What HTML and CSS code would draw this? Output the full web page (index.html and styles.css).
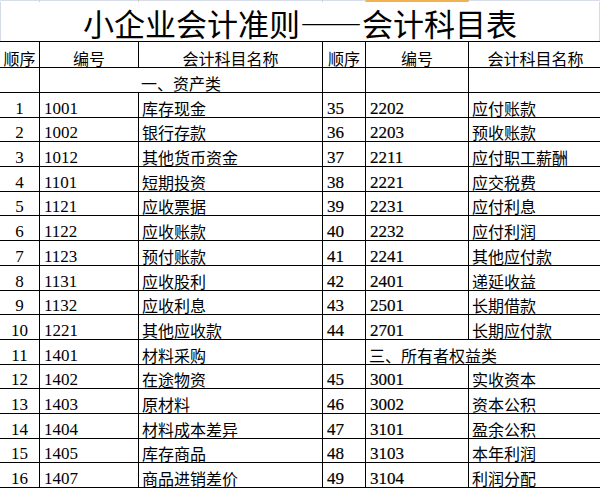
FILE: index.html
```html
<!DOCTYPE html>
<html lang="zh-CN">
<head>
<meta charset="utf-8">
<title>小企业会计准则——会计科目表</title>
<link rel="stylesheet" href="styles.css">
</head>
<body>
<div class="gridtop"><span></span><span></span><span></span><span></span><span class="sel"></span><span></span></div>
<h1 class="title">小企业会计准则——会计科目表</h1>
<div class="sheet">
  <div class="c h">顺序</div><div class="c h">编号</div><div class="c h">会计科目名称</div><div class="c h">顺序</div><div class="c h">编号</div><div class="c h">会计科目名称</div>

  <div class="c"></div><div class="c span2 ctr">一、资产类</div><div class="c"></div><div class="c"></div><div class="c"></div>

  <div class="c n ctr">1</div><div class="c n">1001</div><div class="c">库存现金</div><div class="c n b">35</div><div class="c n b">2202</div><div class="c">应付账款</div>
  <div class="c n ctr">2</div><div class="c n">1002</div><div class="c">银行存款</div><div class="c n b">36</div><div class="c n b">2203</div><div class="c">预收账款</div>
  <div class="c n ctr">3</div><div class="c n">1012</div><div class="c">其他货币资金</div><div class="c n b">37</div><div class="c n b">2211</div><div class="c">应付职工薪酬</div>
  <div class="c n ctr">4</div><div class="c n">1101</div><div class="c">短期投资</div><div class="c n b">38</div><div class="c n b">2221</div><div class="c">应交税费</div>
  <div class="c n ctr">5</div><div class="c n">1121</div><div class="c">应收票据</div><div class="c n b">39</div><div class="c n b">2231</div><div class="c">应付利息</div>
  <div class="c n ctr">6</div><div class="c n">1122</div><div class="c">应收账款</div><div class="c n b">40</div><div class="c n b">2232</div><div class="c">应付利润</div>
  <div class="c n ctr">7</div><div class="c n">1123</div><div class="c">预付账款</div><div class="c n b">41</div><div class="c n b">2241</div><div class="c">其他应付款</div>
  <div class="c n ctr">8</div><div class="c n">1131</div><div class="c">应收股利</div><div class="c n b">42</div><div class="c n b">2401</div><div class="c">递延收益</div>
  <div class="c n ctr">9</div><div class="c n">1132</div><div class="c">应收利息</div><div class="c n b">43</div><div class="c n b">2501</div><div class="c">长期借款</div>
  <div class="c n ctr">10</div><div class="c n">1221</div><div class="c">其他应收款</div><div class="c n b">44</div><div class="c n b">2701</div><div class="c">长期应付款</div>
  <div class="c n ctr">11</div><div class="c n">1401</div><div class="c">材料采购</div><div class="c"></div><div class="c span2">三、所有者权益类</div>
  <div class="c n ctr">12</div><div class="c n">1402</div><div class="c">在途物资</div><div class="c n b">45</div><div class="c n b">3001</div><div class="c">实收资本</div>
  <div class="c n ctr">13</div><div class="c n">1403</div><div class="c">原材料</div><div class="c n b">46</div><div class="c n b">3002</div><div class="c">资本公积</div>
  <div class="c n ctr">14</div><div class="c n">1404</div><div class="c">材料成本差异</div><div class="c n b">47</div><div class="c n b">3101</div><div class="c">盈余公积</div>
  <div class="c n ctr">15</div><div class="c n">1405</div><div class="c">库存商品</div><div class="c n b">48</div><div class="c n b">3103</div><div class="c">本年利润</div>
  <div class="c n ctr">16</div><div class="c n">1407</div><div class="c">商品进销差价</div><div class="c n b">49</div><div class="c n b">3104</div><div class="c">利润分配</div>
</div>
</body>
</html>
```
FILE: styles.css
```css
html, body {
  margin: 0;
  padding: 0;
  overflow: hidden;
  background: #ffffff;
}

body {
  width: 600px;
  height: 489px;
  font-family: "Noto Sans CJK SC", sans-serif;
  color: #000000;
}

.gridtop {
  display: grid;
  grid-template-columns: 40px 99px 184px 43px 103px 134px;
  height: 2px;
  overflow: hidden;
}

.gridtop span {
  border-right: 1px solid #c3cddc;
  border-top: 1px solid #d6dde8;
}

.gridtop .sel {
  background: #f2b250;
  border-top-color: #f2b250;
}

.title {
  box-sizing: border-box;
  width: 600px;
  height: 39px;
  margin: 0;
  padding-bottom: 3px;
  display: flex;
  align-items: flex-end;
  justify-content: center;
  font-size: 31px;
  line-height: 31px;
  font-weight: 400;
  white-space: nowrap;
  border-left: 1px solid #d3dae6;
  border-right: 1px solid #d3dae6;
}

.sheet {
  display: grid;
  grid-template-columns: 40px 99px 184px 43px 103px 134px;
  grid-template-rows: 26px 25px repeat(16, 24.6875px);
  width: 603px;
  border-top: 1px solid #000000;
}

.c {
  box-sizing: border-box;
  display: flex;
  align-items: flex-end;
  justify-content: flex-start;
  padding: 0 3px 1px 3px;
  border-right: 1px solid #000000;
  border-bottom: 1px solid #000000;
  font-size: 16px;
  line-height: 16px;
  white-space: nowrap;
  min-width: 0;
}

.h,
.ctr {
  justify-content: center;
  padding-left: 0;
  padding-right: 0;
}

.span2 {
  grid-column: span 2;
}

.n {
  font-family: "Liberation Serif", serif;
  font-size: 17px;
  padding-bottom: 0;
  padding-left: 4px;
}

.n.ctr {
  padding-left: 0;
}

.b {
  -webkit-text-stroke: 0.2px #000000;
}
```
